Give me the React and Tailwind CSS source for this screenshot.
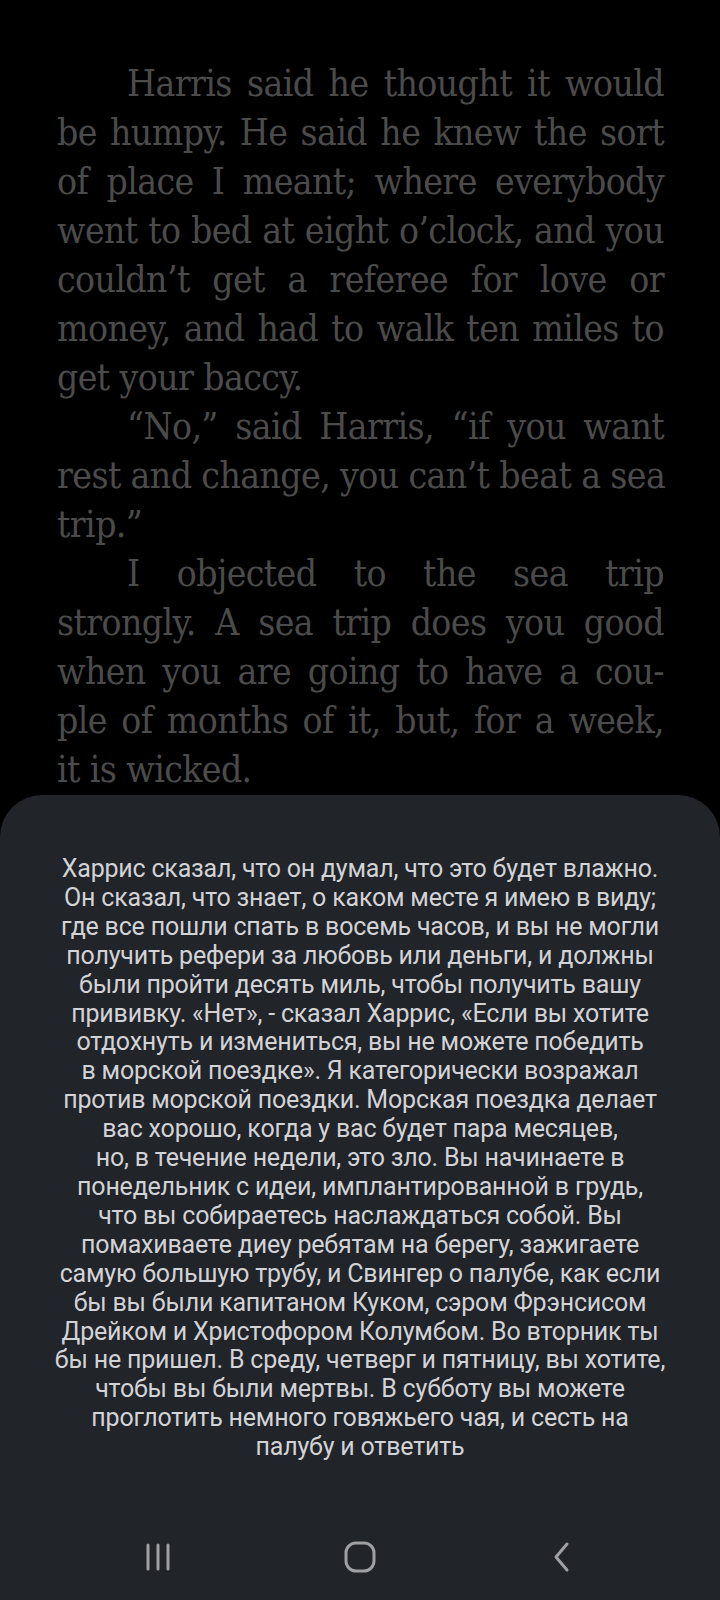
import React from "react";

const paras = [
  [
    "Harris said he thought it would",
    "be humpy. He said he knew the sort",
    "of place I meant; where everybody",
    "went to bed at eight o’clock, and you",
    "couldn’t get a referee for love or",
    "money, and had to walk ten miles to",
    "get your baccy.",
  ],
  [
    "“No,” said Harris, “if you want",
    "rest and change, you can’t beat a sea",
    "trip.”",
  ],
  [
    "I objected to the sea trip",
    "strongly. A sea trip does you good",
    "when you are going to have a cou-",
    "ple of months of it, but, for a week,",
    "it is wicked.",
  ],
];

const ru = [
  "Харрис сказал, что он думал, что это будет влажно.",
  "Он сказал, что знает, о каком месте я имею в виду;",
  "где все пошли спать в восемь часов, и вы не могли",
  "получить рефери за любовь или деньги, и должны",
  "были пройти десять миль, чтобы получить вашу",
  "прививку. «Нет», - сказал Харрис, «Если вы хотите",
  "отдохнуть и измениться, вы не можете победить",
  "в морской поездке». Я категорически возражал",
  "против морской поездки. Морская поездка делает",
  "вас хорошо, когда у вас будет пара месяцев,",
  "но, в течение недели, это зло. Вы начинаете в",
  "понедельник с идеи, имплантированной в грудь,",
  "что вы собираетесь наслаждаться собой. Вы",
  "помахиваете диеу ребятам на берегу, зажигаете",
  "самую большую трубу, и Свингер о палубе, как если",
  "бы вы были капитаном Куком, сэром Фрэнсисом",
  "Дрейком и Христофором Колумбом. Во вторник ты",
  "бы не пришел. В среду, четверг и пятницу, вы хотите,",
  "чтобы вы были мертвы. В субботу вы можете",
  "проглотить немного говяжьего чая, и сесть на",
  "палубу и ответить",
];

export default function App() {
  return (
    <div className="w-[720px] h-[1600px] bg-black flex flex-col overflow-hidden">
      <div
        className="pt-[59px] pl-[57px] pr-[56px] text-[#4b4b4b] text-[37px] leading-[49px] tracking-[-0.6px]"
        style={{ fontFamily: '"DejaVu Serif Condensed", "DejaVu Serif", serif' }}
      >
        {paras.map((p, pi) => (
          <div key={pi}>
            {p.map((line, li) => {
              const last = li === p.length - 1;
              return (
                <div
                  key={li}
                  className={
                    "whitespace-nowrap " +
                    (li === 0 ? "pl-[70px] " : "") +
                    (last ? "text-left" : "text-justify [text-align-last:justify]")
                  }
                >
                  {line}
                </div>
              );
            })}
          </div>
        ))}
      </div>
      <div className="mt-auto h-[805px] bg-[#212429] rounded-t-[42px] flex flex-col">
        <div
          className="pt-[60px] px-[20px] text-center text-[#d2d3d7] text-[25px] leading-[28.9px] tracking-[-0.2px]"
          style={{ fontFamily: 'Roboto, "Noto Sans", sans-serif' }}
        >
          {ru.map((l, i) => (
            <div key={i} className="whitespace-nowrap">{l}</div>
          ))}
        </div>
        <div className="mt-auto h-[86px] flex justify-center items-center">
          <div className="w-[202px] flex justify-center">
            <svg width="28" height="30" viewBox="0 0 28 30" fill="none" stroke="#9fa0a3" strokeWidth="3" strokeLinecap="round">
              <line x1="4" y1="3" x2="4" y2="27" />
              <line x1="14" y1="3" x2="14" y2="27" />
              <line x1="24" y1="3" x2="24" y2="27" />
            </svg>
          </div>
          <div className="w-[202px] flex justify-center">
            <svg width="34" height="34" viewBox="0 0 34 34" fill="none" stroke="#9fa0a3" strokeWidth="3">
              <rect x="3" y="3" width="28" height="28" rx="10" />
            </svg>
          </div>
          <div className="w-[202px] flex justify-center">
            <svg width="20" height="32" viewBox="0 0 20 32" fill="none" stroke="#9fa0a3" strokeWidth="3" strokeLinecap="round" strokeLinejoin="round">
              <polyline points="15,3 4,16 15,29" />
            </svg>
          </div>
        </div>
      </div>
    </div>
  );
}
